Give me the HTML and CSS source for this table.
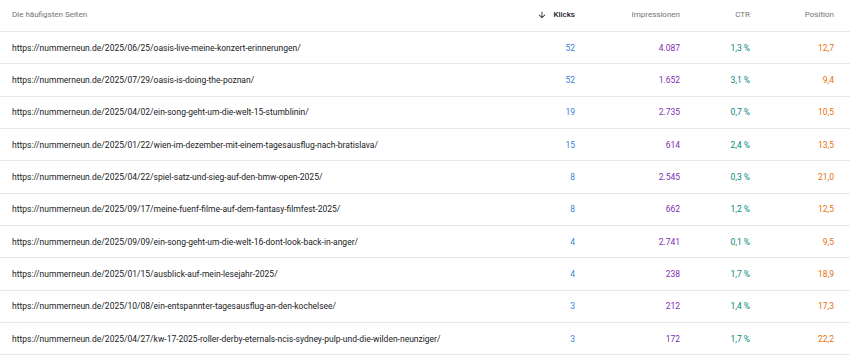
FILE: index.html
```html
<!DOCTYPE html>
<html lang="de">
<head>
<meta charset="utf-8">
<link rel="stylesheet" href="styles.css">
</head>
<body>
<div class="table">
  <div class="row head">
    <div class="cell page">Die häufigsten Seiten</div>
    <div class="cell num sorted"><svg class="arrow" width="10" height="10" viewBox="0 0 24 24"><path d="M20 12l-1.41-1.41L13 16.17V4h-2v12.17l-5.58-5.59L4 12l8 8 8-8z" fill="#202124"/></svg>Klicks</div>
    <div class="cell num">Impressionen</div>
    <div class="cell num">CTR</div>
    <div class="cell num">Position</div>
  </div>
  <div class="row"><div class="cell page">https://nummerneun.de/2025/06/25/oasis-live-meine-konzert-erinnerungen/</div><div class="cell num c">52</div><div class="cell num i">4.087</div><div class="cell num t">1,3 %</div><div class="cell num p">12,7</div></div>
  <div class="row"><div class="cell page">https://nummerneun.de/2025/07/29/oasis-is-doing-the-poznan/</div><div class="cell num c">52</div><div class="cell num i">1.652</div><div class="cell num t">3,1 %</div><div class="cell num p">9,4</div></div>
  <div class="row"><div class="cell page">https://nummerneun.de/2025/04/02/ein-song-geht-um-die-welt-15-stumblinin/</div><div class="cell num c">19</div><div class="cell num i">2.735</div><div class="cell num t">0,7 %</div><div class="cell num p">10,5</div></div>
  <div class="row"><div class="cell page">https://nummerneun.de/2025/01/22/wien-im-dezember-mit-einem-tagesausflug-nach-bratislava/</div><div class="cell num c">15</div><div class="cell num i">614</div><div class="cell num t">2,4 %</div><div class="cell num p">13,5</div></div>
  <div class="row"><div class="cell page">https://nummerneun.de/2025/04/22/spiel-satz-und-sieg-auf-den-bmw-open-2025/</div><div class="cell num c">8</div><div class="cell num i">2.545</div><div class="cell num t">0,3 %</div><div class="cell num p">21,0</div></div>
  <div class="row"><div class="cell page">https://nummerneun.de/2025/09/17/meine-fuenf-filme-auf-dem-fantasy-filmfest-2025/</div><div class="cell num c">8</div><div class="cell num i">662</div><div class="cell num t">1,2 %</div><div class="cell num p">12,5</div></div>
  <div class="row"><div class="cell page">https://nummerneun.de/2025/09/09/ein-song-geht-um-die-welt-16-dont-look-back-in-anger/</div><div class="cell num c">4</div><div class="cell num i">2.741</div><div class="cell num t">0,1 %</div><div class="cell num p">9,5</div></div>
  <div class="row"><div class="cell page">https://nummerneun.de/2025/01/15/ausblick-auf-mein-lesejahr-2025/</div><div class="cell num c">4</div><div class="cell num i">238</div><div class="cell num t">1,7 %</div><div class="cell num p">18,9</div></div>
  <div class="row"><div class="cell page">https://nummerneun.de/2025/10/08/ein-entspannter-tagesausflug-an-den-kochelsee/</div><div class="cell num c">3</div><div class="cell num i">212</div><div class="cell num t">1,4 %</div><div class="cell num p">17,3</div></div>
  <div class="row"><div class="cell page">https://nummerneun.de/2025/04/27/kw-17-2025-roller-derby-eternals-ncis-sydney-pulp-und-die-wilden-neunziger/</div><div class="cell num c">3</div><div class="cell num i">172</div><div class="cell num t">1,7 %</div><div class="cell num p">22,2</div></div>
</div>
</body>
</html>
```

FILE: styles.css
```css
html, body {
  margin: 0;
  padding: 0;
  background: #ffffff;
}
body {
  font-family: Roboto, "Liberation Sans", Arial, sans-serif;
  color: #202124;
  overflow: hidden;
}
.table {
  width: 850px;
}
.row {
  display: grid;
  grid-template-columns: minmax(0, 1fr) 100px 105px 70px 84px;
  height: 32.33px;
  box-sizing: border-box;
  border-bottom: 1px solid #e8e8e8;
  align-items: center;
}
.row.head {
  height: 32px;
  padding-bottom: 2px;
}
.cell {
  font-size: 8.5px;
  white-space: nowrap;
  overflow: hidden;
}
.page {
  padding-left: 12px;
  color: #202124;
}
.num {
  text-align: right;
  padding-right: 16px;
}
.head .cell {
  font-size: 8px;
  color: #6f7377;
}
.head .sorted {
  color: #202124;
  font-weight: 500;
  display: flex;
  justify-content: flex-end;
  align-items: center;
  gap: 6px;
}
.arrow {
  display: block;
}
.c { color: #3b7fd6; }
.i { color: #7b2fb5; }
.t { color: #00897b; }
.p { color: #e8710a; }
```
